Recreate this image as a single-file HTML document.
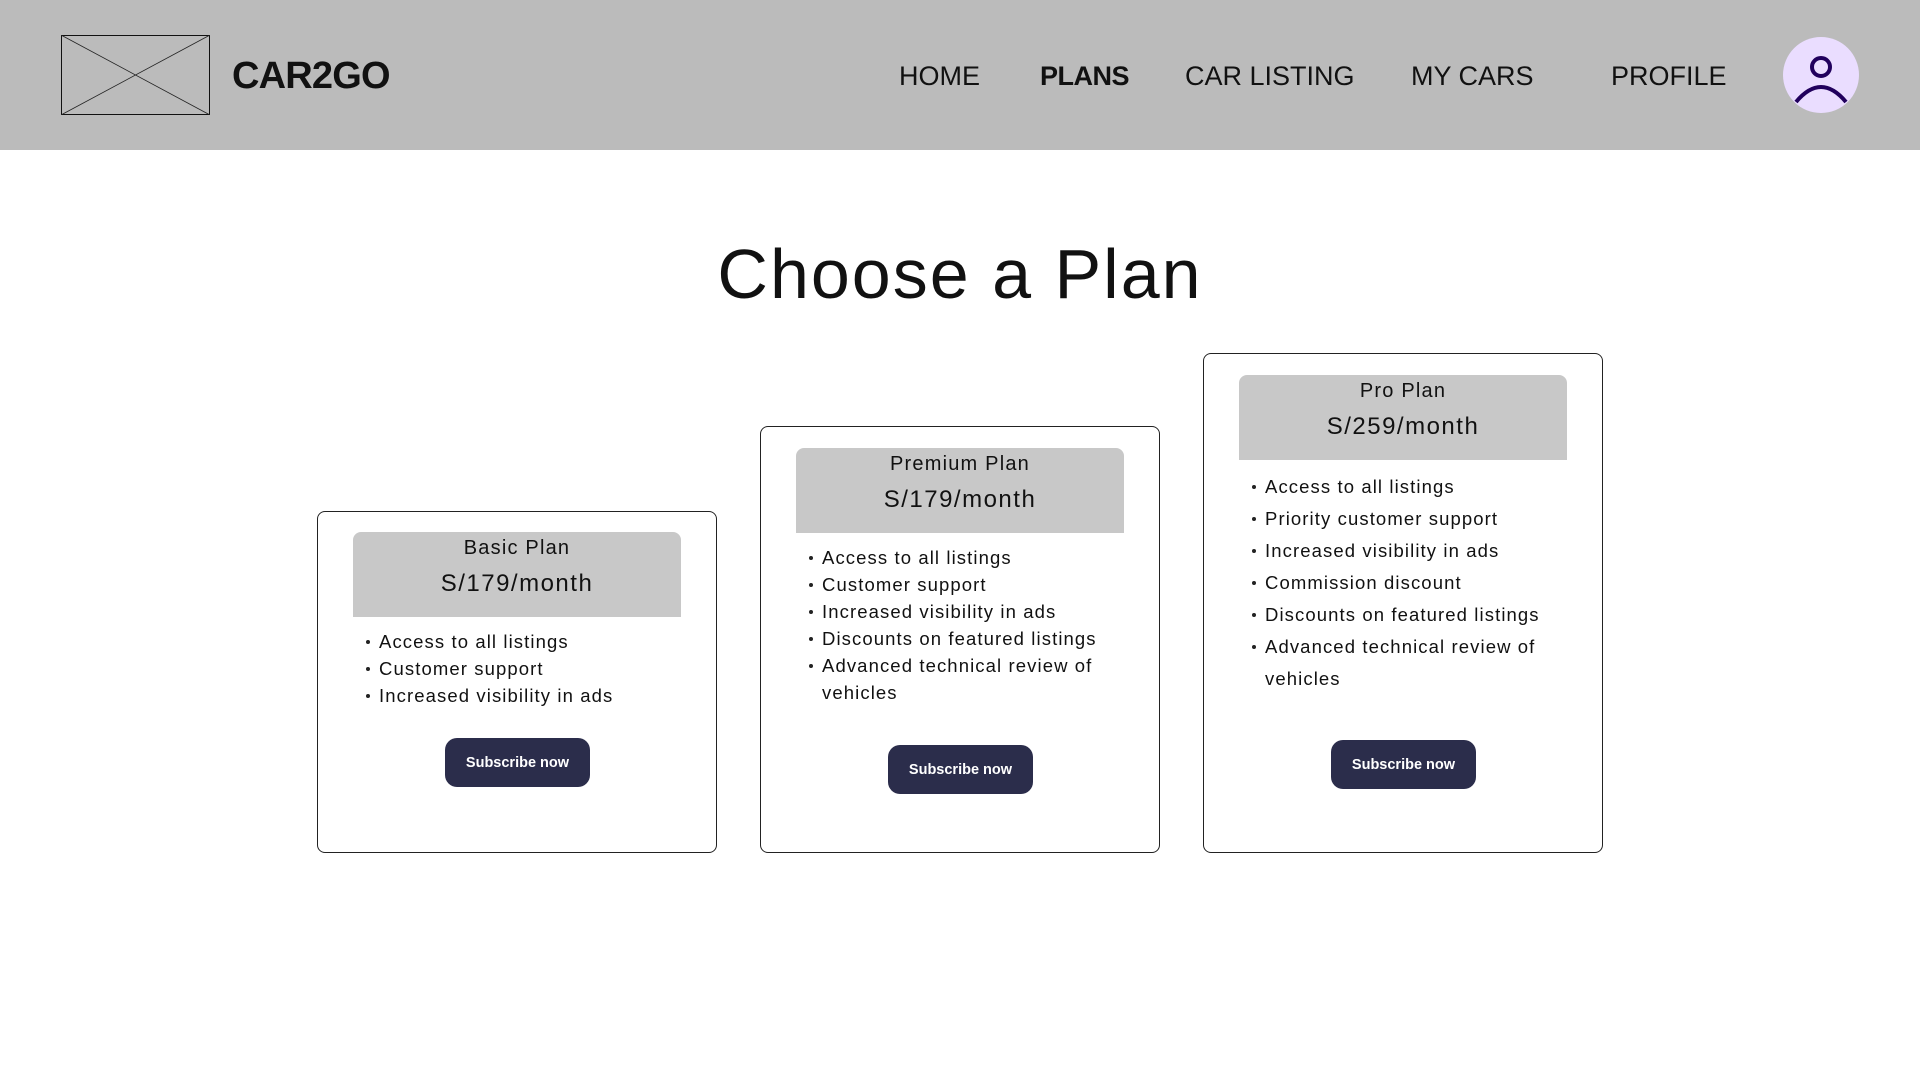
<!DOCTYPE html>
<html><head><meta charset="utf-8"><style>
*{margin:0;padding:0;box-sizing:border-box}
body{width:1920px;height:1080px;background:#fff;position:relative;overflow:hidden;font-family:"Liberation Sans",sans-serif;color:#111}
.hdr{position:absolute;left:0;top:0;width:1920px;height:150px;background:#bbbbbb}
.nav{position:absolute;top:57px;font-size:27px;line-height:38px;color:#111}
.card{position:absolute;width:400px;border:1.5px solid #222;border-radius:8px;background:#fff}
.box{position:absolute;left:35px;width:328px;height:85px;background:#c8c8c8;border-radius:8px 8px 0 0;text-align:center;letter-spacing:1px}
.nm{position:absolute;left:0;right:0;top:1px;font-size:20px;line-height:30px;letter-spacing:1.2px}
.pr{position:absolute;left:0;right:0;top:34px;font-size:24px;line-height:36px;letter-spacing:1.5px}
ul{position:absolute;left:48px;list-style:none;font-size:18.5px;letter-spacing:1.1px}
li{position:relative;padding-left:13px}
li:before{content:"";position:absolute;left:0;top:50%;width:4px;height:4px;margin-top:-2px;border-radius:50%;background:#222}
li.c:before{display:none}
.btn{position:absolute;left:127px;width:145px;height:49px;background:#2b2d4b;border-radius:12px;color:#fff;font-weight:bold;font-size:14.5px;text-align:center;line-height:50px}
</style></head><body>
<div class="hdr">
<svg style="position:absolute;left:61px;top:35px" width="149" height="80"><rect x="0.5" y="0.5" width="148" height="79" fill="none" stroke="#111" stroke-width="1"/><line x1="0" y1="0" x2="149" y2="80" stroke="#222" stroke-width="0.8"/><line x1="149" y1="0" x2="0" y2="80" stroke="#222" stroke-width="0.8"/></svg>
<div style="position:absolute;left:232px;top:54px;font-size:38px;font-weight:bold;line-height:44px;color:#111;letter-spacing:-0.8px">CAR2GO</div>
<div class="nav" style="left:899px">HOME</div>
<div class="nav" style="left:1040px;font-weight:bold;letter-spacing:-0.5px">PLANS</div>
<div class="nav" style="left:1185px">CAR LISTING</div>
<div class="nav" style="left:1411px">MY CARS</div>
<div class="nav" style="left:1611px">PROFILE</div>
<svg style="position:absolute;left:1783px;top:37px" width="76" height="76"><circle cx="38" cy="38" r="38" fill="#eaddff"/><circle cx="38" cy="30" r="9" fill="none" stroke="#21005d" stroke-width="4"/><path d="M13 65 Q38 35 63 65" fill="none" stroke="#21005d" stroke-width="4"/></svg>
</div>
<div style="position:absolute;left:0;width:1920px;top:232px;text-align:center;font-size:70px;line-height:84px;letter-spacing:2px;color:#111">Choose a Plan</div>

<div class="card" style="left:317px;top:511px;height:342px">
<div class="box" style="top:20px"><div class="nm">Basic Plan</div><div class="pr">S/179/month</div></div>
<ul style="top:116px;line-height:27px"><li>Access to all listings</li><li>Customer support</li><li>Increased visibility in ads</li></ul>
<div class="btn" style="top:226px">Subscribe now</div>
</div>

<div class="card" style="left:760px;top:426px;height:427px">
<div class="box" style="top:21px"><div class="nm">Premium Plan</div><div class="pr">S/179/month</div></div>
<ul style="top:117px;line-height:27px"><li>Access to all listings</li><li>Customer support</li><li>Increased visibility in ads</li><li>Discounts on featured listings</li><li>Advanced technical review of</li><li class="c">vehicles</li></ul>
<div class="btn" style="top:318px">Subscribe now</div>
</div>

<div class="card" style="left:1203px;top:353px;height:500px">
<div class="box" style="top:21px"><div class="nm">Pro Plan</div><div class="pr">S/259/month</div></div>
<ul style="top:117px;line-height:32px"><li>Access to all listings</li><li>Priority customer support</li><li>Increased visibility in ads</li><li>Commission discount</li><li>Discounts on featured listings</li><li>Advanced technical review of</li><li class="c">vehicles</li></ul>
<div class="btn" style="top:386px">Subscribe now</div>
</div>
</body></html>
